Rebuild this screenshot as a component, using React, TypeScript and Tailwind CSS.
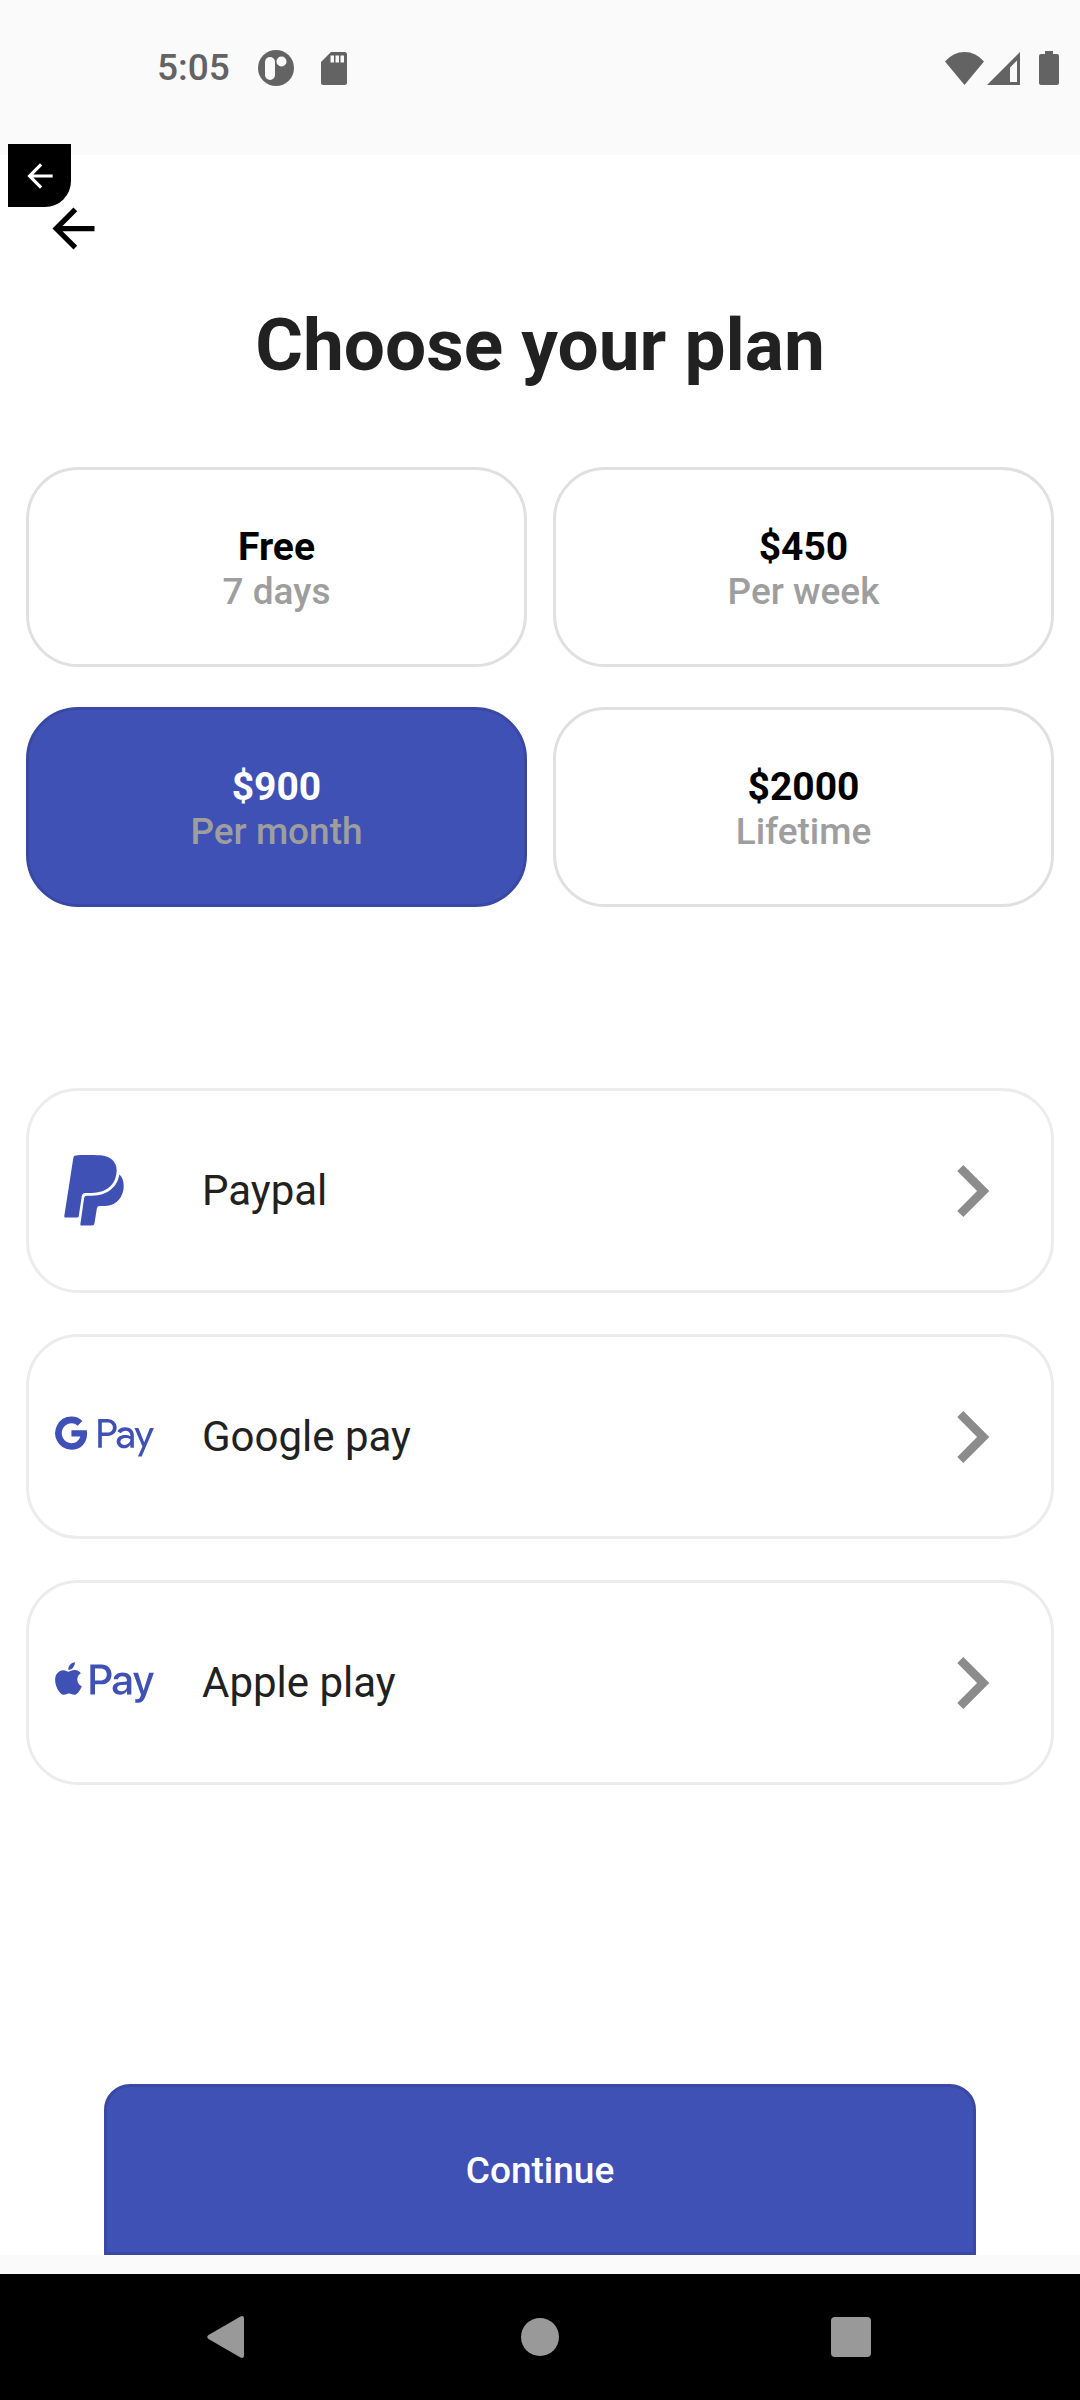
import { useState } from "react";
import { FaApplePay, FaGooglePay } from "react-icons/fa";
import { MdArrowBack, MdChevronRight } from "react-icons/md";

const plans = [
  { price: "Free", period: "7 days" },
  { price: "$450", period: "Per week" },
  { price: "$900", period: "Per month" },
  { price: "$2000", period: "Lifetime" },
];

function PaypalIcon() {
  return (
    <svg viewBox="192 253 179 211" className="ml-[9px] h-[71px] w-[60px]" fill="currentColor" aria-hidden="true">
      <path d="M220 260Q221 254 227 254C240 252.500 275 252.500 300 253.500C332 256 351 274 349 302C346 345 316 365 275 366L256 366Q247 366 245 375L236 435Q235 439 231 439L196 439Q192 439 193 434Z" />
      <path d="M357 311C369 320 372 340 369 358C362 390 341 404 312 405L298 405Q291 405 290 412L283 456Q282 463 276 463L243 463Q240 463 241 458L252 381Q253 374 260 374L275 374C325 374 352 345 357 311Z" />
    </svg>
  );
}

const methods = [
  { name: "Paypal", icon: <PaypalIcon /> },
  { name: "Google pay", icon: <FaGooglePay className="h-[79px] w-[99px]" /> },
  { name: "Apple play", icon: <FaApplePay className="h-[79px] w-[99px]" /> },
];

function StatusBar() {
  return (
    <header className="flex h-[155px] items-start justify-between bg-[#fafafa] pt-[46px] pr-[21px] pl-[157px] text-[#636363]">
      <div className="flex items-center">
        <span className="text-[37px] leading-[44px] font-medium">5:05</span>
        <svg viewBox="0 0 36 36" className="ml-[28px] h-[36px] w-[36px]" aria-hidden="true">
          <circle cx="18" cy="18" r="18" fill="currentColor" />
          <rect x="7" y="7" width="10" height="23" rx="5" fill="#fafafa" />
          <circle cx="23.500" cy="11.500" r="5" fill="#fafafa" />
        </svg>
        <svg viewBox="0 0 26 33" className="ml-[27px] h-[33px] w-[26px]" aria-hidden="true">
          <path d="M10 0H23.500Q26 0 26 2.500V30.500Q26 33 23.500 33H2.500Q0 33 0 30.500V10Z" fill="currentColor" />
          <path d="M9.500 3.500H13V10.500H9.500ZM14.500 3.500H18V10.500H14.500ZM19.500 3.500H23V10.500H19.500Z" fill="#fafafa" />
        </svg>
      </div>
      <div className="flex h-[44px] items-center" aria-hidden="true">
        <svg viewBox="0 0 39 33" className="h-[33px] w-[39px]">
          <path d="M0 9.500Q8 0 19.500 0T39 9.500L19.500 33Z" fill="currentColor" />
        </svg>
        <svg viewBox="0 0 33 33" className="ml-[3px] h-[33px] w-[33px]">
          <path d="M33 0V33H0ZM30 8.500L23 15.500V30H30Z" fill="currentColor" fillRule="evenodd" />
        </svg>
        <svg viewBox="0 0 20 34" className="ml-[19px] h-[34px] w-[20px]">
          <path d="M6 0H14V3H18Q20 3 20 5V32Q20 34 18 34H2Q0 34 0 32V5Q0 3 2 3H6Z" fill="currentColor" />
        </svg>
      </div>
    </header>
  );
}

function NavBar() {
  return (
    <nav className="grid h-[126px] grid-cols-3 place-items-center bg-black px-[73px] text-[#999999]">
      <button type="button" aria-label="Back">
        <svg viewBox="0 0 44 42" className="h-[42px] w-[44px]" fill="currentColor">
          <path d="M33.500 0.500Q37 -1 37 3V39Q37 43 33.500 41.500L1.500 23Q-1 21 1.500 19Z" />
        </svg>
      </button>
      <button type="button" aria-label="Home">
        <span className="block h-[38px] w-[38px] rounded-full bg-[#999999]" />
      </button>
      <button type="button" aria-label="Overview">
        <span className="block h-[40px] w-[40px] rounded bg-[#999999]" />
      </button>
    </nav>
  );
}

export default function App() {
  const [selected, setSelected] = useState("$900");

  return (
    <div className="relative flex min-h-screen flex-col bg-[#fafafa] font-[Roboto,sans-serif] text-[#212121]">
      <StatusBar />

      <button
        type="button"
        aria-label="Exit"
        className="absolute top-[144px] left-[8px] flex h-[63px] w-[63px] items-center justify-center rounded-br-[26px] bg-black text-white"
      >
        <MdArrowBack className="h-[38px] w-[38px]" />
      </button>

      <main className="flex flex-1 flex-col bg-white px-[26px] pt-[42px]">
        <button type="button" aria-label="Go back" className="ml-[16px] self-start text-black">
          <MdArrowBack className="h-[63px] w-[63px]" />
        </button>

        <h1 className="mt-[41px] text-center text-[73px] leading-[88px] font-bold">Choose your plan</h1>

        <div className="mt-[78px] grid grid-cols-2 gap-x-[26px] gap-y-[40px]">
          {plans.map(({ price, period }) => (
            <button
              key={price}
              type="button"
              aria-pressed={selected === price}
              onClick={() => setSelected(price)}
              className={
                selected === price
                  ? "flex h-[200px] flex-col items-center justify-center rounded-[52px] border-[3px] border-[#3949a3] bg-[#3f51b5] pt-[4px] text-white"
                  : "flex h-[200px] flex-col items-center justify-center rounded-[52px] border-[3px] border-[#e0e0e0] bg-white pt-[4px] text-black"
              }
            >
              <span className="text-[39px] leading-[46px] font-bold">{price}</span>
              <span className="text-[37px] leading-[44px] font-medium text-[#9e9e9e]">{period}</span>
            </button>
          ))}
        </div>

        <div className="mt-[181px] flex flex-col gap-[41px]">
          {methods.map(({ name, icon }) => (
            <button
              key={name}
              type="button"
              className="flex h-[205px] items-center rounded-[52px] border-[3px] border-[#ececec] bg-white pr-[27px] pl-[26px] text-left"
            >
              <span className="w-[147px] text-[#3f51b5]">{icon}</span>
              <span className="flex-1 text-[42px] leading-[50px]">{name}</span>
              <MdChevronRight className="h-[104px] w-[104px] text-[#8c8c8c]" />
            </button>
          ))}
        </div>

        <button
          type="button"
          className="mx-[78px] mt-auto h-[171px] rounded-t-[26px] border-[3px] border-[#3949a3] bg-[#3f51b5] pt-[2px] text-[37px] leading-[44px] font-medium text-white"
        >
          Continue
        </button>
      </main>

      <div className="h-[19px]" />
      <NavBar />
    </div>
  );
}
